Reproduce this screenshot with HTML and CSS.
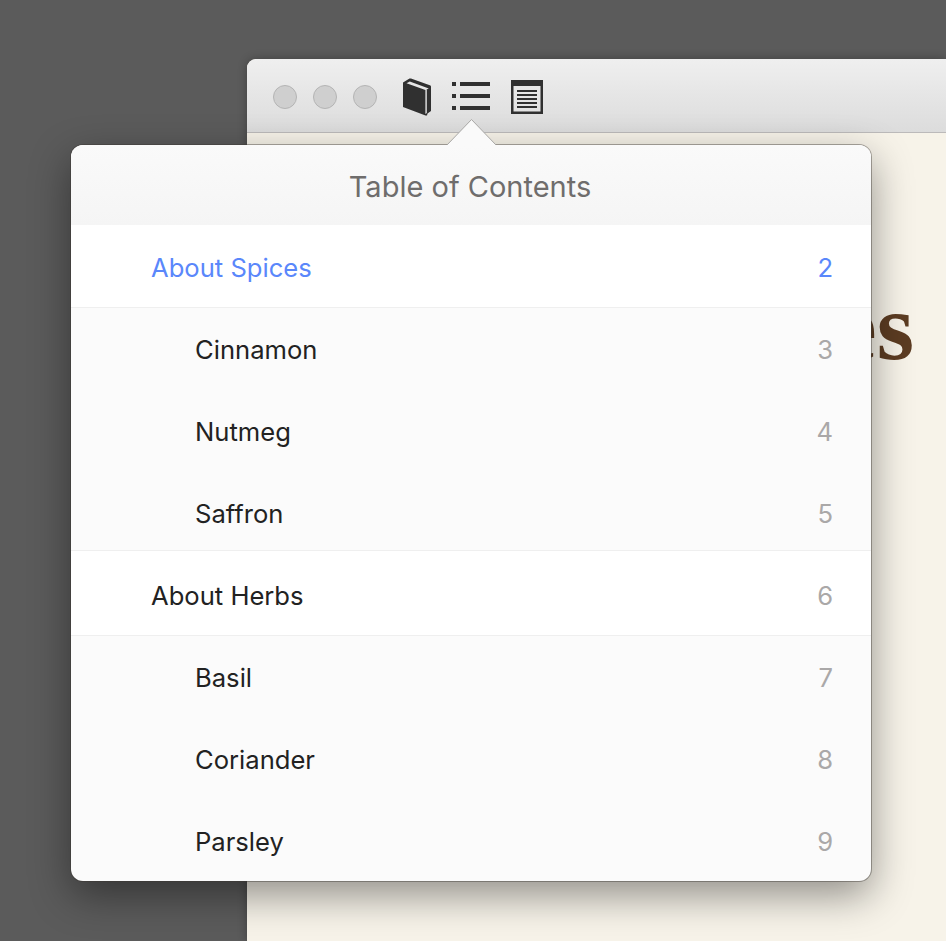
FILE: index.html
```html
<!DOCTYPE html>
<html lang="en">
<head>
<meta charset="utf-8">
<title>Table of Contents</title>
<link rel="stylesheet" href="styles.css">
</head>
<body>
<div class="window">
  <header class="toolbar">
    <div class="lights"><span class="light"></span><span class="light"></span><span class="light"></span></div>
    <div class="tools">
      <svg class="icon-book" width="30" height="40" viewBox="0 0 30 40" aria-hidden="true">
        <path class="ink" d="M1 5.500 7.500 1.500 9 1.500 28.500 8.500 29 9.500 29 34 25.500 36.500 25 38.500 23.500 38.500 1 30Z"/>
        <path class="paper" d="M4.500 6.200 7.800 4.600 26.800 11.400 23.400 13ZM23.400 13 24.800 12.400 24.800 36 23.400 37Z"/>
      </svg>
      <svg class="icon-list" width="38" height="28" viewBox="0 0 38 28" aria-hidden="true">
        <path class="ink" d="M0 0h4v4H0ZM8 0h30v4H8ZM0 12h4v4H0ZM8 12h30v4H8ZM0 24h4v4H0ZM8 24h30v4H8Z"/>
      </svg>
      <svg class="icon-page" width="32" height="34" viewBox="0 0 32 34" aria-hidden="true">
        <path class="ink" d="M0 0h32v34H0ZM2.500 6v25.500h27V6Z" fill-rule="evenodd"/>
        <path class="ink" d="M6 10h20v2H6ZM6 14h20v2H6ZM6 18h20v2H6ZM6 22h20v2H6ZM6 26h20v2H6Z"/>
      </svg>
    </div>
  </header>
  <main class="page">
    <h1 class="page-title">Spices</h1>
  </main>
</div>

<section class="popover">
  <svg class="arrow" width="54" height="27" viewBox="0 0 54 27" aria-hidden="true">
    <path class="arrow-fill" d="M2 26 26.500 0.500 51 26"/>
  </svg>
  <h2 class="popover-title">Table of Contents</h2>
  <ol class="toc">
    <li class="row chapter current"><span>About Spices</span><span class="num">2</span></li>
    <li class="row"><span>Cinnamon</span><span class="num">3</span></li>
    <li class="row"><span>Nutmeg</span><span class="num">4</span></li>
    <li class="row group-end"><span>Saffron</span><span class="num">5</span></li>
    <li class="row chapter"><span>About Herbs</span><span class="num">6</span></li>
    <li class="row"><span>Basil</span><span class="num">7</span></li>
    <li class="row"><span>Coriander</span><span class="num">8</span></li>
    <li class="row group-end"><span>Parsley</span><span class="num">9</span></li>
  </ol>
</section>
</body>
</html>
```
FILE: styles.css
```css
* { box-sizing: border-box; }
html, body { margin: 0; height: 100%; overflow: hidden; }
body {
  background: #5b5b5b;
  padding: 59px 0 0 247px;
  font-family: Inter, "Noto Sans", sans-serif;
}
.window {
  width: 699px;
  height: 882px;
  display: flex;
  flex-direction: column;
  border-top-left-radius: 9px;
  overflow: hidden;
  background: #f7f3e9;
  box-shadow: 0 0 10px rgba(0, 0, 0, .3);
}
.toolbar {
  height: 74px;
  flex: none;
  display: flex;
  align-items: center;
  padding: 2px 0 0 26px;
  background: linear-gradient(#efefef, #dcdcdc);
  border-bottom: 1px solid #bcbaba;
}
.lights { display: flex; gap: 16px; }
.light {
  width: 24px;
  height: 24px;
  border-radius: 50%;
  background: #cfcfcf;
  border: 1px solid #b4b4b4;
}
.tools { display: flex; align-items: center; margin-left: 25px; }
.icon-list { margin: 0 0 2px 20px; }
.icon-page { margin-left: 21px; }
.ink { fill: #303030; }
.paper { fill: #e6e6e6; }
.page { flex: 1; padding: 141px 32px 0 0; text-align: right; }
.page-title {
  margin: 0;
  font: 700 96px/1.1 "Liberation Serif", serif;
  color: #5c3c22;
}
.popover {
  position: absolute;
  left: 71px;
  top: 145px;
  width: 800px;
  height: 736px;
  background: #fbfbfb;
  border-radius: 12px;
  box-shadow: 0 0 0 1px rgba(60, 55, 50, .42), 0 14px 40px rgba(0, 0, 0, .42);
}
.arrow { position: absolute; left: 374px; top: -26px; overflow: visible; }
.arrow-fill { fill: #fafafa; stroke: #a9a8a6; stroke-width: 1; }
.popover-title {
  position: relative;
  margin: 0;
  height: 80px;
  padding: 2px 2px 0 0;
  display: flex;
  align-items: center;
  justify-content: center;
  font-size: 29px;
  font-weight: 400;
  color: #6f6d6c;
  border-radius: 12px 12px 0 0;
  background: linear-gradient(#fafafa, #f5f5f5);
}
.toc { list-style: none; margin: 0; padding: 0; }
.row {
  height: 82px;
  display: flex;
  align-items: flex-start;
  justify-content: space-between;
  padding: 27px 38px 0 124px;
  font-size: 25.6px;
  line-height: 30px;
  color: #222222;
}
.row .num { color: #aaa8a8; }
.group-end { height: 78px; }
.chapter {
  height: 86px;
  padding: 30px 38px 0 80px;
  background: #ffffff;
  border-top: 1px solid #efefef;
  border-bottom: 1px solid #efefef;
}
.current {
  height: 83px;
  padding-top: 28px;
  border-top: 0;
  color: #5a87fb;
}
.current .num { color: #5a87fb; }
```
